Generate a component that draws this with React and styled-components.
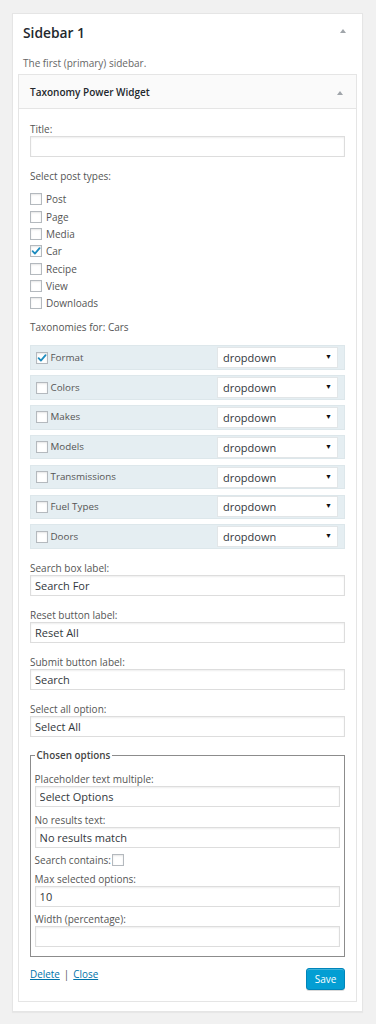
import React from "react";
import styled, { createGlobalStyle } from "styled-components";

const Global = createGlobalStyle`
  html, body { margin: 0; padding: 0; background: #f1f1f1; }
  body { font-family: "Open Sans", "Noto Sans", sans-serif; color: #555; }
  * { box-sizing: border-box; }
`;

const Page = styled.div`
  padding: 13px 13px 14px 12px;
`;

const SidebarBox = styled.section`
  background: #fff;
  border: 1px solid #e5e5e5;
  box-shadow: 0 1px 1px rgba(0,0,0,.04);
  padding: 0 5px 9px 5px;
`;

const SidebarHeader = styled.div`
  display: flex;
  justify-content: space-between;
  align-items: center;
  padding: 8.5px 11.5px 0 5px;
`;

const SidebarTitle = styled.h2`
  margin: 0;
  font-size: 13.8px;
  line-height: 20px;
  font-weight: 600;
  color: #23282d;
`;

const Arrow = styled.span`
  width: 0;
  height: 0;
  border-left: 3.5px solid transparent;
  border-right: 3.5px solid transparent;
  border-bottom: 4px solid #a0a5aa;
  margin-top: ${p => p.$mt || 0}px;
`;

const Description = styled.p`
  margin: 13.5px 0 4px 5px;
  font-size: 10px;
  line-height: 14px;
  color: #666;
`;

const Widget = styled.div`
  border: 1px solid #e5e5e5;
  background: #fff;
`;

const WidgetTop = styled.div`
  height: 34px;
  background: #fafafa;
  border-bottom: 1px solid #e5e5e5;
  display: flex;
  align-items: center;
  justify-content: space-between;
  padding: 0 13px 0 11px;
`;

const WidgetTitle = styled.h3`
  margin: 0;
  font-size: 10px;
  font-weight: 600;
  color: #23282d;
`;

const WidgetBody = styled.div`
  padding: 13px 11px 11.4px 11px;
`;

const Field = styled.div`
  margin-bottom: ${p => p.$gap ?? 12}px;
`;

const Label = styled.label`
  display: block;
  font-size: 10px;
  line-height: ${p => p.$lh || 14}px;
  color: #555;
`;

const TextInput = styled.input`
  display: block;
  width: 100%;
  height: ${p => p.$h || 21}px;
  margin: 0;
  border: 1px solid #ddd;
  box-shadow: inset 0 1px 2px rgba(0,0,0,.07);
  background: #fff;
  padding: 0 4px;
  font-family: inherit;
  font-size: 11px;
  color: #32373c;
  outline: none;
`;

const CheckList = styled.div`
  display: flex;
  flex-direction: column;
  margin: 7.8px 0 8.1px;
`;

const CheckRow = styled.div`
  height: 17.33px;
  display: flex;
  align-items: center;
  gap: 4px;
  font-size: 10px;
  color: #555;
`;

const Box = styled.span`
  width: 12px;
  height: 12px;
  flex: none;
  border: 1px solid #b4b9be;
  background: #fff;
  box-shadow: inset 0 1px 2px rgba(0,0,0,.1);
  display: inline-flex;
  align-items: center;
  justify-content: center;
`;

const Check = ({ checked }) => (
  <Box>
    {checked && (
      <svg width="10" height="10" viewBox="0 0 10 10">
        <path d="M1.6 5.2 L3.9 7.6 L8.6 2.2" fill="none" stroke="#1e8cbe" strokeWidth="1.8" strokeLinecap="round" strokeLinejoin="round" />
      </svg>
    )}
  </Box>
);

const SectionLabel = styled.div`
  font-size: 10px;
  line-height: 14px;
  color: #555;
  margin-bottom: 11.3px;
`;

const TaxList = styled.div`
  display: flex;
  flex-direction: column;
  gap: 5.33px;
  margin-bottom: 11.8px;
`;

const TaxRow = styled.div`
  height: 24.5px;
  background: #e5eef2;
  border: 1px solid #dde7eb;
  display: grid;
  grid-template-columns: 1fr 121px;
  align-items: center;
  padding: 0 6px 0 4.5px;
`;

const TaxName = styled.span`
  display: flex;
  align-items: center;
  gap: 3px;
  font-size: 9.8px;
  color: #555;
`;

const TaxText = styled.span`
  margin-top: -1px;
`;

const SelectBox = styled.div`
  height: 21px;
  background: #fff;
  border: 1px solid #e2e6e8;
  display: flex;
  align-items: center;
  justify-content: space-between;
  padding: 0 5px 0 5px;
  font-size: 11px;
  color: #32373c;
`;

const Caret = styled.span`
  font-size: 7px;
  color: #111;
  margin-top: -2px;
`;

const Fieldset = styled.fieldset`
  margin: 12px 0 11px;
  padding: 11.7px 3.6px 9px;
  border: 1px solid #8c8c8c;
`;

const Legend = styled.legend`
  font-size: 9.9px;
  line-height: 13px;
  font-weight: 600;
  color: #444;
  padding: 0 2px;
`;

const InlineCheck = styled.div`
  display: flex;
  align-items: center;
  gap: 1px;
  height: 13px;
  font-size: 10px;
  color: #555;
  margin-bottom: 6.7px;
`;

const Footer = styled.div`
  display: flex;
  justify-content: space-between;
  align-items: flex-start;
`;

const Links = styled.div`
  font-size: 9.9px;
  line-height: 13px;
  color: #555;
  display: flex;
  gap: 4px;
`;

const Link = styled.a`
  color: #0073aa;
  text-decoration: underline;
`;

const SaveButton = styled.button`
  height: 21.6px;
  width: 39px;
  padding: 0;
  border: 1px solid #0085ba;
  border-radius: 3px;
  background: #039ed3;
  box-shadow: inset 0 1px 0 rgba(120,200,230,.5), 0 1px 0 rgba(0,0,0,.15);
  color: #fff;
  font-family: inherit;
  font-size: 10px;
`;

const postTypes = [
  ["Post", false], ["Page", false], ["Media", false], ["Car", true],
  ["Recipe", false], ["View", false], ["Downloads", false],
];

const taxonomies = [
  ["Format", true], ["Colors", false], ["Makes", false], ["Models", false],
  ["Transmissions", false], ["Fuel Types", false], ["Doors", false],
];

const TextField = ({ label, value, gap, lh, h }) => (
  <Field $gap={gap}>
    <Label $lh={lh}>{label}</Label>
    <TextInput $h={h} readOnly defaultValue={value} />
  </Field>
);

const InnerField = (props) => <TextField lh={13} h={20.7} gap={6.8} {...props} />;

export default function App() {
  return (
    <>
      <Global />
      <Page>
        <SidebarBox>
          <SidebarHeader>
            <SidebarTitle>Sidebar 1</SidebarTitle>
            <Arrow $mt={-3} />
          </SidebarHeader>
          <Description>The first (primary) sidebar.</Description>
          <Widget>
            <WidgetTop>
              <WidgetTitle>Taxonomy Power Widget</WidgetTitle>
              <Arrow $mt={2} />
            </WidgetTop>
            <WidgetBody>
              <TextField label="Title:" value="" />
              <Label>Select post types:</Label>
              <CheckList>
                {postTypes.map(([name, c]) => (
                  <CheckRow key={name}>
                    <Check checked={c} />
                    {name}
                  </CheckRow>
                ))}
              </CheckList>
              <SectionLabel>Taxonomies for: Cars</SectionLabel>
              <TaxList>
                {taxonomies.map(([name, c]) => (
                  <TaxRow key={name}>
                    <TaxName>
                      <Check checked={c} />
                      <TaxText>{name}</TaxText>
                    </TaxName>
                    <SelectBox>
                      dropdown
                      <Caret>▼</Caret>
                    </SelectBox>
                  </TaxRow>
                ))}
              </TaxList>
              <TextField label="Search box label:" value="Search For" />
              <TextField label="Reset button label:" value="Reset All" />
              <TextField label="Submit button label:" value="Search" />
              <TextField label="Select all option:" value="Select All" gap={0} />
              <Fieldset>
                <Legend>Chosen options</Legend>
                <InnerField label="Placeholder text multiple:" value="Select Options" />
                <InnerField label="No results text:" value="No results match" gap={5.6} />
                <InlineCheck>
                  Search contains:
                  <Check checked={false} />
                </InlineCheck>
                <InnerField label="Max selected options:" value="10" />
                <InnerField label="Width (percentage):" value="" gap={0} />
              </Fieldset>
              <Footer>
                <Links>
                  <Link href="#">Delete</Link>|<Link href="#">Close</Link>
                </Links>
                <SaveButton>Save</SaveButton>
              </Footer>
            </WidgetBody>
          </Widget>
        </SidebarBox>
      </Page>
    </>
  );
}
